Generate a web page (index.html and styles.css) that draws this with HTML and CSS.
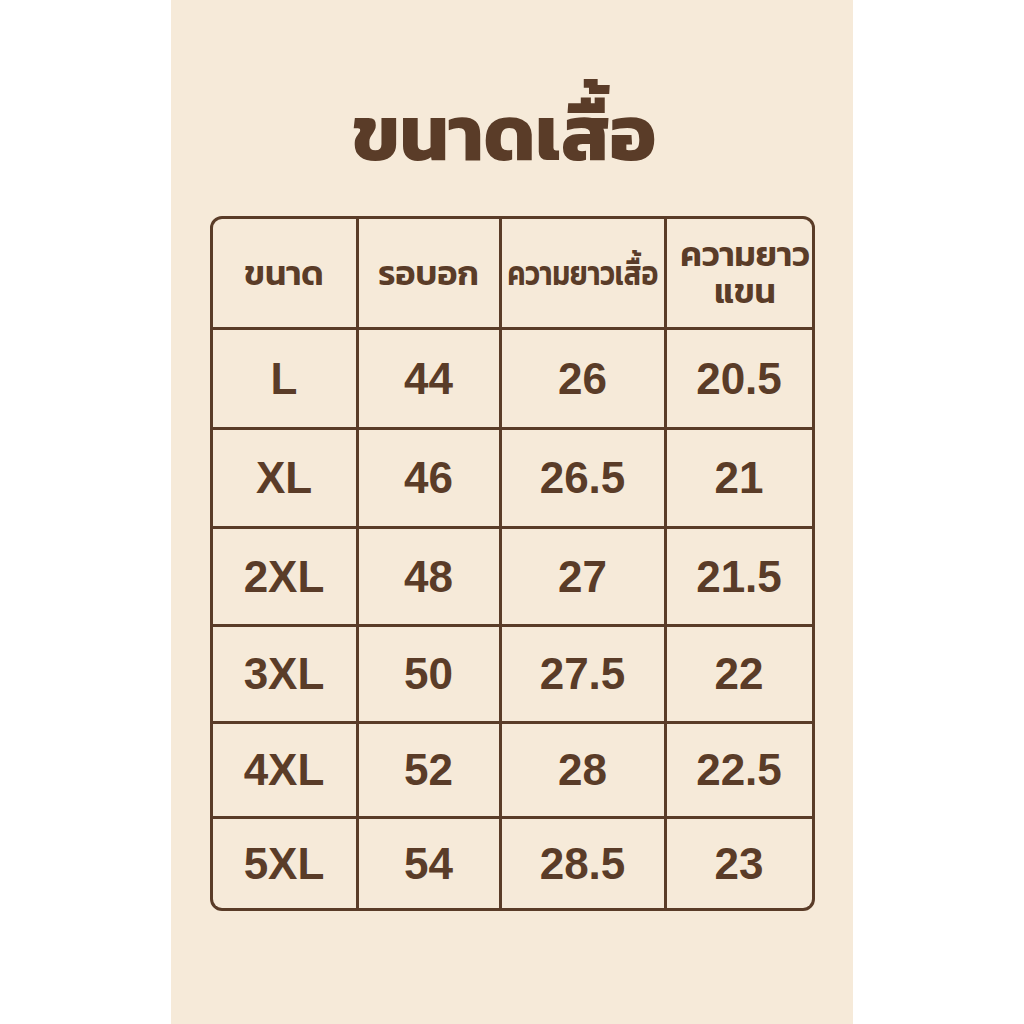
FILE: index.html
```html
<!DOCTYPE html>
<html lang="th">
<head>
<meta charset="utf-8">
<link rel="stylesheet" href="styles.css">
</head>
<body>
<main class="panel">
  <h1 class="title">ขนาดเสื้อ</h1>
  <div class="chart">
    <div class="cell head">ขนาด</div>
    <div class="cell head">รอบอก</div>
    <div class="cell head"><span class="squeeze">ความยาวเสื้อ</span></div>
    <div class="cell head head-wrap">ความยาว<br>แขน</div>

    <div class="cell">L</div><div class="cell">44</div><div class="cell">26</div><div class="cell">20.5</div>
    <div class="cell">XL</div><div class="cell">46</div><div class="cell">26.5</div><div class="cell">21</div>
    <div class="cell">2XL</div><div class="cell">48</div><div class="cell">27</div><div class="cell">21.5</div>
    <div class="cell">3XL</div><div class="cell">50</div><div class="cell">27.5</div><div class="cell">22</div>
    <div class="cell">4XL</div><div class="cell">52</div><div class="cell">28</div><div class="cell">22.5</div>
    <div class="cell">5XL</div><div class="cell">54</div><div class="cell">28.5</div><div class="cell">23</div>
  </div>
</main>
</body>
</html>
```
FILE: styles.css
```css
html, body {
  margin: 0;
  padding: 0;
  background: #ffffff;
}
.panel {
  width: 682px;
  height: 1024px;
  margin: 0 auto;
  background: #f6ead9;
  display: flex;
  flex-direction: column;
  align-items: center;
  box-sizing: border-box;
  padding-top: 76px;
  color: #5a3c28;
}
.title {
  margin: 0;
  font-family: "Kanit", "Noto Sans Thai", sans-serif;
  font-weight: 700;
  font-size: 78px;
  line-height: 114px;
  height: 114px;
  margin-left: -16px;
}
.chart {
  margin-top: 26px;
  width: 605px;
  box-sizing: border-box;
  border: 3px solid #5a3c28;
  border-radius: 12px;
  overflow: hidden;
  background: #5a3c28;
  display: grid;
  grid-template-columns: 143px 140px 162px 145px;
  grid-template-rows: 108px 97px 96px 95px 94px 92px 89px;
  gap: 3px;
}
.cell {
  background: #f6ead9;
  display: flex;
  align-items: center;
  justify-content: center;
  text-align: center;
  font-family: "Liberation Sans", Arial, sans-serif;
  font-weight: 700;
  font-size: 44px;
  line-height: 1;
  white-space: nowrap;
}
.head {
  font-family: "Kanit", "Noto Sans Thai", sans-serif;
  font-weight: 600;
  font-size: 34px;
  line-height: 37px;
}
.head-wrap {
  padding-left: 12px;
}
.squeeze {
  display: inline-block;
  transform: scaleX(0.83);
}
```
